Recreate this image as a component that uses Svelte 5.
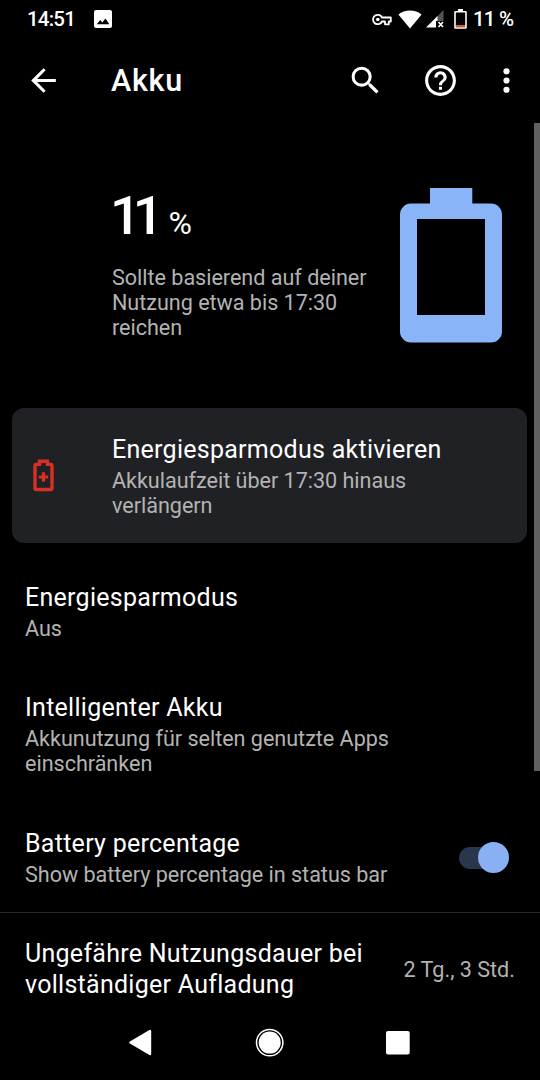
<script lang="ts">
	let level = $state(11);
	let showPercentage = $state(true);

	const preferences = [
		{ title: "Energiesparmodus", summary: "Aus" },
		{
			title: "Intelligenter Akku",
			summary: "Akkunutzung für selten genutzte Apps einschränken"
		}
	];
</script>

<div class="screen">
	<header class="status-bar">
		<span class="clock">14:51</span>
		<svg class="picture" width="18" height="18" viewBox="0 0 18 18">
			<path
				fill="#fff"
				fill-rule="evenodd"
				d="M2 0h14a2 2 0 0 1 2 2v14a2 2 0 0 1-2 2H2a2 2 0 0 1-2-2V2a2 2 0 0 1 2-2zM2.8 14.2h12.6l-4-5.6-3 3.9-2.2-2.6z"
			/>
		</svg>
		<div class="indicators">
			<svg class="key" width="20" height="13" viewBox="0 0 20 13">
				<path
					d="M10 4.5A4.7 4.7 0 1 0 10 8.5H13v2.8h3.8V8.5h2V4.5z"
					fill="none"
					stroke="#fff"
					stroke-width="1.8"
					stroke-linejoin="round"
				/>
				<circle cx="5.8" cy="6.5" r="1.8" fill="#fff" />
			</svg>
			<svg class="wifi" width="24" height="19" viewBox="0 0 24 19">
				<path d="M.4 4.4C6.6-.9 17.4-.9 23.6 4.4L12 18.6z" fill="#fff" />
			</svg>
			<svg class="signal" width="18" height="18" viewBox="0 0 18 18">
				<path d="M17.5 0v11H7z" fill="#555" />
				<path d="M11.5 6v5H10v6.5H0z" fill="#fff" />
				<path d="m12.5 12 4.5 5m0-5-4.5 5" stroke="#fff" stroke-width="1.6" />
			</svg>
			<svg class="battery-small" width="13" height="20" viewBox="0 0 13 20">
				<path d="M4 0h5v2H4z" fill="#fff" />
				<rect x="1" y="2.7" width="11" height="16.3" rx=".6" fill="none" stroke="#fff" stroke-width="1.6" />
				<path d="M2 16h9v2H2z" fill="#e8512f" />
			</svg>
			<span class="status-level">{level} %</span>
		</div>
	</header>

	<div class="toolbar">
		<button type="button" class="icon-button" aria-label="Nach oben">
			<svg width="37" height="37" viewBox="0 0 24 24" fill="#fff">
				<path d="M20 11H7.83l5.59-5.59L12 4l-8 8 8 8 1.41-1.41L7.83 13H20z" />
			</svg>
		</button>
		<h1>Akku</h1>
		<button type="button" class="icon-button search" aria-label="Suchen">
			<svg width="37" height="37" viewBox="0 0 24 24" fill="#fff">
				<path
					d="M15.5 14h-.79l-.28-.27A6.471 6.471 0 0 0 16 9.5 6.5 6.5 0 1 0 9.5 16c1.61 0 3.09-.59 4.23-1.57l.27.28v.79l5 4.99L20.49 19l-4.99-5zm-6 0C7.01 14 5 11.99 5 9.5S7.01 5 9.5 5 14 7.01 14 9.5 11.99 14 9.5 14z"
				/>
			</svg>
		</button>
		<button type="button" class="icon-button help" aria-label="Hilfe">
			<svg width="37" height="37" viewBox="0 0 24 24" fill="#fff">
				<path
					d="M11 18h2v-2h-2v2zm1-16C6.48 2 2 6.48 2 12s4.48 10 10 10 10-4.48 10-10S17.52 2 12 2zm0 18c-4.41 0-8-3.59-8-8s3.59-8 8-8 8 3.59 8 8-3.59 8-8 8zm0-14c-2.21 0-4 1.79-4 4h2c0-1.1.9-2 2-2s2 .9 2 2c0 2-3 1.75-3 5h2c0-2.25 3-2.5 3-5 0-2.21-1.79-4-4-4z"
				/>
			</svg>
		</button>
		<button type="button" class="icon-button more" aria-label="Weitere Optionen">
			<svg width="37" height="37" viewBox="0 0 24 24" fill="#fff">
				<circle cx="12" cy="6" r="2" />
				<circle cx="12" cy="12" r="2" />
				<circle cx="12" cy="18" r="2" />
			</svg>
		</button>
	</div>

	<main>
		<section class="overview">
			<div class="overview-text">
				<div class="level"><span class="number">{level}</span><span class="unit">%</span></div>
				<p class="summary">Sollte basierend auf deiner Nutzung etwa bis 17:30 reichen</p>
			</div>
			<svg class="battery" width="102" height="155" viewBox="0 0 102 155">
				<path
					fill="#8ab4f8"
					fill-rule="evenodd"
					d="M30 0h42.3v15.5H91a11 11 0 0 1 11 11V143.5a11 11 0 0 1-11 11H11a11 11 0 0 1-11-11V26.5a11 11 0 0 1 11-11h19zM17 31v96h68V31z"
				/>
			</svg>
		</section>

		<section class="card">
			<svg class="saver" width="22" height="33" viewBox="0 0 22 33">
				<path
					d="M6.5 2.2h8v3.2H17.5q1.5 0 1.5 1.5V29q0 1.5-1.5 1.5H3.5Q2 30.5 2 29V6.9q0-1.5 1.5-1.5h3z"
					fill="none"
					stroke="#d93025"
					stroke-width="3.4"
				/>
				<path d="M10.5 13.3v9.4M5.8 18h9.4" stroke="#d93025" stroke-width="3.2" />
			</svg>
			<div class="card-text">
				<h2 class="title">Energiesparmodus aktivieren</h2>
				<p class="summary">Akkulaufzeit über 17:30 hinaus verlängern</p>
			</div>
		</section>

		{#each preferences as pref}
			<section class="preference">
				<h2 class="title">{pref.title}</h2>
				<p class="summary">{pref.summary}</p>
			</section>
		{/each}

		<section class="preference with-switch">
			<div>
				<h2 class="title">Battery percentage</h2>
				<p class="summary">Show battery percentage in status bar</p>
			</div>
			<button
				type="button"
				class="switch"
				class:on={showPercentage}
				role="switch"
				aria-checked={showPercentage}
				aria-label="Battery percentage"
				onclick={() => (showPercentage = !showPercentage)}
			>
				<span class="thumb"></span>
			</button>
		</section>

		<section class="usage">
			<h2 class="title">Ungefähre Nutzungsdauer bei vollständiger Aufladung</h2>
			<span class="usage-value">2 Tg., 3 Std.</span>
		</section>

		<div class="scrollbar"></div>
	</main>

	<nav>
		<svg width="540" height="75" viewBox="0 0 540 75" fill="#fff">
			<path
				d="M130.5 37.5 150 26v23z"
				stroke="#fff"
				stroke-width="2.4"
				stroke-linejoin="round"
			/>
			<circle cx="269.7" cy="37.6" r="13.2" fill="none" stroke="#fff" stroke-width="1.5" />
			<circle cx="269.7" cy="37.6" r="11" />
			<rect x="386" y="26" width="23.7" height="23.5" rx="2" />
		</svg>
	</nav>
</div>

<style>
	:global(body) {
		margin: 0;
		background: #000;
	}

	.screen {
		display: flex;
		flex-direction: column;
		width: 540px;
		height: 1080px;
		overflow: hidden;
		background: #000;
		color: #fff;
		font-family: Roboto, sans-serif;
	}

	h1,
	h2,
	p {
		margin: 0;
		font-weight: 400;
	}

	button {
		padding: 0;
		border: 0;
		background: none;
		cursor: pointer;
	}

	svg {
		display: block;
		flex: none;
	}

	.status-bar {
		display: flex;
		align-items: center;
		flex: none;
		height: 38px;
		padding: 0 27px;
		font-size: 20.5px;
		font-weight: 500;
		letter-spacing: -0.8px;
	}

	.clock {
		width: 67px;
		white-space: nowrap;
	}

	.indicators {
		display: flex;
		align-items: center;
		margin-left: auto;
	}

	.wifi {
		margin-left: 6px;
	}

	.signal {
		margin-left: 4px;
	}

	.battery-small {
		margin-left: 10px;
	}

	.status-level {
		width: 40px;
		margin-left: 6px;
		white-space: nowrap;
	}

	.toolbar {
		display: flex;
		align-items: center;
		flex: none;
		height: 85px;
		padding-left: 25px;
	}

	h1 {
		width: 236px;
		margin-left: 49px;
		font-size: 30.5px;
		line-height: 40px;
		font-weight: 500;
		letter-spacing: 0.7px;
	}

	.help {
		margin-left: 38px;
	}

	.more {
		margin-left: 28.5px;
	}

	main {
		position: relative;
		flex: 1;
		min-height: 0;
	}

	.overview {
		display: flex;
		height: 285px;
		padding-left: 112px;
		box-sizing: border-box;
	}

	.overview-text {
		width: 288px;
		padding-top: 62px;
	}

	.level {
		display: flex;
		align-items: baseline;
		height: 80px;
		font-size: 54px;
		line-height: 62px;
		font-weight: 500;
	}

	.number {
		margin-left: -2px;
		letter-spacing: -8px;
	}

	.unit {
		margin-left: 13px;
		font-size: 32px;
		font-weight: 400;
	}

	.overview .summary {
		width: 270px;
		margin-top: 0;
	}

	.battery {
		margin-top: 65px;
	}

	.summary {
		margin-top: 3px;
		color: #b3b3b3;
		font-size: 21.6px;
		line-height: 25px;
		letter-spacing: -0.03px;
	}

	.title {
		font-size: 25px;
		line-height: 31px;
		letter-spacing: 0.27px;
	}

	.card {
		display: flex;
		align-items: center;
		width: 515px;
		height: 135px;
		margin-left: 12.4px;
		padding-left: 20.6px;
		box-sizing: border-box;
		border-radius: 12px;
		background: #202124;
	}

	.card-text {
		width: 350px;
		margin-left: 57px;
	}

	.preference {
		padding: 0 25px;
		margin-top: 39px;
	}

	.preference .summary {
		width: 390px;
	}

	.preference + .preference {
		margin-top: 51px;
	}

	.with-switch {
		display: flex;
		align-items: center;
		justify-content: space-between;
	}

	.switch {
		display: flex;
		align-items: center;
		width: 50px;
		height: 22px;
		margin-right: 6px;
		border-radius: 11px;
		background: #333;
	}

	.preference.with-switch {
		margin-top: 52px;
	}

	.switch.on {
		justify-content: flex-end;
		background: linear-gradient(90deg, #2a364b 42px, transparent 42px);
	}

	.thumb {
		width: 31px;
		height: 31px;
		flex: none;
		border-radius: 50%;
		background: #8ab0f4;
	}

	.usage {
		display: flex;
		align-items: center;
		justify-content: space-between;
		margin-top: 25px;
		padding: 25px 25px 0;
		border-top: 1px solid #262626;
	}

	.usage .title {
		width: 360px;
	}

	.usage-value {
		color: #b3b3b3;
		font-size: 21.6px;
	}

	.scrollbar {
		position: absolute;
		top: 0;
		right: 0;
		width: 6px;
		height: 648px;
		background: #606060;
	}

	nav {
		flex: none;
		height: 75px;
	}
</style>
